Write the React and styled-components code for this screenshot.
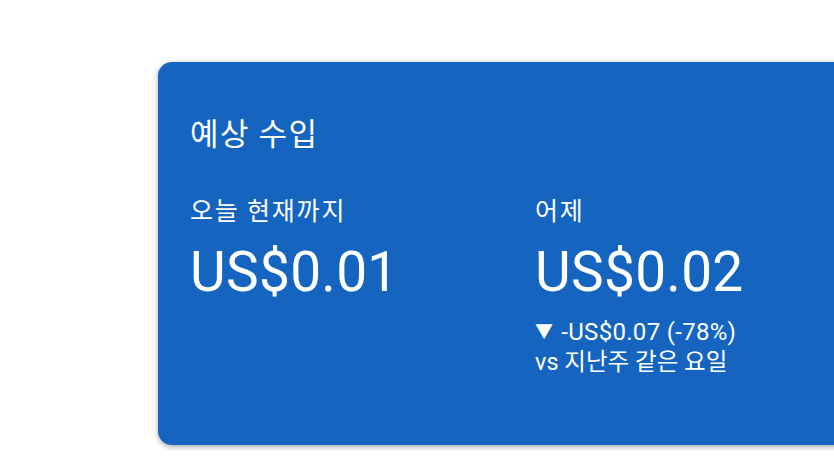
import React from "react";
import styled, { createGlobalStyle } from "styled-components";

const GlobalStyle = createGlobalStyle`
  html, body {
    margin: 0;
    padding: 0;
    background: #ffffff;
    overflow: hidden;
  }
  body {
    font-family: Roboto, "Noto Sans CJK KR", sans-serif;
  }
`;

const Page = styled.div`
  width: 834px;
  height: 469px;
  padding: 62px 0 0 158px;
  box-sizing: border-box;
  overflow: hidden;
`;

const Card = styled.section`
  width: 720px;
  height: 383px;
  box-sizing: border-box;
  background: #1565c0;
  border-radius: 14px;
  box-shadow: 0 2px 4px rgba(0, 0, 0, 0.25), 0 1px 8px rgba(0, 0, 0, 0.12);
  padding: 50px 32px 0 32px;
  color: #ffffff;
`;

const Title = styled.h2`
  margin: 0;
  font-family: "Noto Sans CJK KR", sans-serif;
  font-weight: 400;
  font-size: 31px;
  line-height: 40px;
  letter-spacing: 1.5px;
`;

const Columns = styled.div`
  display: grid;
  grid-template-columns: 345px 1fr;
  margin-top: 41px;
`;

const Column = styled.div`
  display: flex;
  flex-direction: column;
`;

const Label = styled.div`
  font-family: "Noto Sans CJK KR", sans-serif;
  font-size: 25px;
  line-height: 32px;
  letter-spacing: 1.8px;
`;

const Value = styled.div`
  font-family: Roboto, sans-serif;
  font-size: 55px;
  line-height: 64px;
  margin-top: 15px;
  letter-spacing: 0.3px;
`;

const Change = styled.div`
  font-family: Roboto, "Noto Sans CJK KR", sans-serif;
  font-size: 24px;
  line-height: 30px;
  margin-top: 13px;
  letter-spacing: 0.3px;
`;

const Arrow = styled.span`
  display: inline-block;
  font-size: 18px;
  margin-right: 8px;
  vertical-align: 2px;
`;

const Compare = styled.div`
  font-family: Roboto, "Noto Sans CJK KR", sans-serif;
  font-size: 23.5px;
  line-height: 30px;
`;

export default function App() {
  return (
    <>
      <GlobalStyle />
      <Page>
        <Card>
          <Title>예상 수입</Title>
          <Columns>
            <Column>
              <Label>오늘 현재까지</Label>
              <Value>US$0.01</Value>
            </Column>
            <Column>
              <Label>어제</Label>
              <Value>US$0.02</Value>
              <Change>
                <Arrow>▼</Arrow>-US$0.07 (-78%)
              </Change>
              <Compare>vs 지난주 같은 요일</Compare>
            </Column>
          </Columns>
        </Card>
      </Page>
    </>
  );
}
